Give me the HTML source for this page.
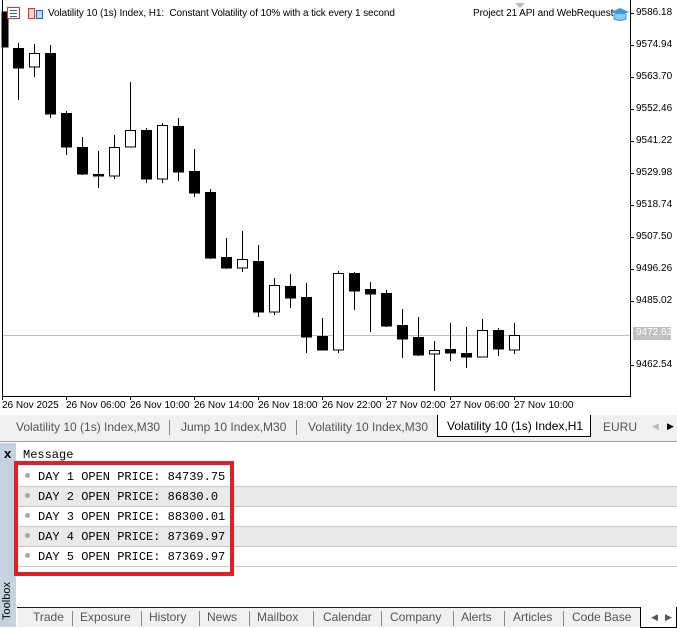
<!DOCTYPE html>
<html><head><meta charset="utf-8">
<style>
*{margin:0;padding:0;box-sizing:border-box}
body{width:677px;height:627px;overflow:hidden;background:#fff;font-family:"Liberation Sans",sans-serif;font-size:11px;color:#000;position:relative}
.abs{position:absolute;white-space:nowrap}
.pl{position:absolute;left:636px;font-size:10px}
.tl{position:absolute;top:400px;font-size:10px}
.tabs{position:absolute;left:0;top:415px;width:677px;height:27px;background:#f0f0f0;border-bottom:1px solid #a0a0a0}
.tab{position:absolute;top:5px;font-size:12px;color:#555}
.sep{position:absolute;top:5px;width:1px;height:15px;background:#888}
.row{position:absolute;left:17px;width:660px;height:20px;border-bottom:1px solid #c8c8c8;font-family:"Liberation Mono",monospace;font-size:12px;line-height:20px}
.row span.d{display:inline-block;width:5px;height:5px;border-radius:50%;background:#aaa;margin:0 8px 2px 8px;vertical-align:middle}
.g{background:#e9e9e9}
.btabs{position:absolute;left:17px;top:607px;width:660px;height:20px;background:#f0f0f0;border-top:1px solid #222}
.bt{position:absolute;top:2px;font-size:12px;color:#555}
</style></head><body>
<svg class="abs" style="left:0;top:0" width="677" height="415">
<rect x="2.5" y="-1" width="628" height="397.5" fill="none" stroke="#000"/>
<line x1="3" y1="335.5" x2="630" y2="335.5" stroke="#c0c0c0"/>
<polygon points="515,3 525,3 520,8" fill="#bbb"/>
<g stroke="#000" stroke-width="1">
<rect x="2" y="12" width="6" height="35" fill="#000"/>
<line x1="18.5" y1="43" x2="18.5" y2="100"/><rect x="13.5" y="48.5" width="10" height="19.5" fill="#000"/>
<line x1="34.5" y1="44" x2="34.5" y2="77"/><rect x="29.5" y="53.5" width="10" height="13.5" fill="#fff"/>
<line x1="50.5" y1="45" x2="50.5" y2="118"/><rect x="45.5" y="53.5" width="10" height="60.5" fill="#000"/>
<line x1="66.5" y1="111" x2="66.5" y2="155"/><rect x="61.5" y="113.5" width="10" height="33.5" fill="#000"/>
<line x1="82.5" y1="137" x2="82.5" y2="175"/><rect x="77.5" y="147.5" width="10" height="26.5" fill="#000"/>
<line x1="98.5" y1="151" x2="98.5" y2="188"/><rect x="93.5" y="174.5" width="10" height="1.5" fill="#000"/>
<line x1="114.5" y1="135" x2="114.5" y2="179"/><rect x="109.5" y="147.5" width="10" height="28.5" fill="#fff"/>
<line x1="130.5" y1="82" x2="130.5" y2="147"/><rect x="125.5" y="130.5" width="10" height="16.5" fill="#fff"/>
<line x1="146.5" y1="128" x2="146.5" y2="183"/><rect x="141.5" y="130.5" width="10" height="48.5" fill="#000"/>
<line x1="162.5" y1="123" x2="162.5" y2="183"/><rect x="157.5" y="125.5" width="10" height="53.5" fill="#fff"/>
<line x1="178.5" y1="118" x2="178.5" y2="181"/><rect x="173.5" y="126.5" width="10" height="45.5" fill="#000"/>
<line x1="194.5" y1="149" x2="194.5" y2="197"/><rect x="189.5" y="171.5" width="10" height="21.5" fill="#000"/>
<line x1="210.5" y1="189" x2="210.5" y2="259"/><rect x="205.5" y="192.5" width="10" height="65.5" fill="#000"/>
<line x1="226.5" y1="238" x2="226.5" y2="269"/><rect x="221.5" y="257.5" width="10" height="10.5" fill="#000"/>
<line x1="242.5" y1="231" x2="242.5" y2="272"/><rect x="237.5" y="259.5" width="10" height="8.5" fill="#fff"/>
<line x1="258.5" y1="245" x2="258.5" y2="317"/><rect x="253.5" y="261.5" width="10" height="50.5" fill="#000"/>
<line x1="274.5" y1="278" x2="274.5" y2="315"/><rect x="269.5" y="285.5" width="10" height="26.5" fill="#fff"/>
<line x1="290.5" y1="274" x2="290.5" y2="308"/><rect x="285.5" y="286.5" width="10" height="11.5" fill="#000"/>
<line x1="306.5" y1="283" x2="306.5" y2="353"/><rect x="301.5" y="297.5" width="10" height="39.5" fill="#000"/>
<line x1="322.5" y1="318" x2="322.5" y2="350"/><rect x="317.5" y="336.5" width="10" height="13.5" fill="#000"/>
<line x1="338.5" y1="271" x2="338.5" y2="353"/><rect x="333.5" y="273.5" width="10" height="76.5" fill="#fff"/>
<line x1="354.5" y1="272" x2="354.5" y2="310"/><rect x="349.5" y="273.5" width="10" height="17.5" fill="#000"/>
<line x1="370.5" y1="282" x2="370.5" y2="332"/><rect x="365.5" y="289.5" width="10" height="4.5" fill="#000"/>
<line x1="386.5" y1="290" x2="386.5" y2="327"/><rect x="381.5" y="293.5" width="10" height="32.5" fill="#000"/>
<line x1="402.5" y1="309" x2="402.5" y2="358"/><rect x="397.5" y="325.5" width="10" height="13.5" fill="#000"/>
<line x1="418.5" y1="317" x2="418.5" y2="356"/><rect x="413.5" y="337.5" width="10" height="17.5" fill="#000"/>
<line x1="434.5" y1="341" x2="434.5" y2="391"/><rect x="429.5" y="350.5" width="10" height="3.5" fill="#fff"/>
<line x1="450.5" y1="323" x2="450.5" y2="361"/><rect x="445.5" y="349.5" width="10" height="3.5" fill="#000"/>
<line x1="466.5" y1="327" x2="466.5" y2="368"/><rect x="461.5" y="353.5" width="10" height="3.5" fill="#000"/>
<line x1="482.5" y1="319" x2="482.5" y2="357"/><rect x="477.5" y="330.5" width="10" height="26.5" fill="#fff"/>
<line x1="498.5" y1="328" x2="498.5" y2="356"/><rect x="493.5" y="330.5" width="10" height="18.5" fill="#000"/>
<line x1="514.5" y1="323" x2="514.5" y2="354"/><rect x="509.5" y="335.5" width="10" height="14.5" fill="#fff"/>
</g>
<g stroke="#000">
<line x1="630" y1="13.5" x2="634" y2="13.5"/><line x1="630" y1="45.5" x2="634" y2="45.5"/><line x1="630" y1="77.5" x2="634" y2="77.5"/><line x1="630" y1="109.5" x2="634" y2="109.5"/><line x1="630" y1="141.5" x2="634" y2="141.5"/><line x1="630" y1="173.5" x2="634" y2="173.5"/><line x1="630" y1="205.5" x2="634" y2="205.5"/><line x1="630" y1="237.5" x2="634" y2="237.5"/><line x1="630" y1="269.5" x2="634" y2="269.5"/><line x1="630" y1="301.5" x2="634" y2="301.5"/><line x1="630" y1="365.5" x2="634" y2="365.5"/>
<line x1="2.5" y1="396" x2="2.5" y2="400"/><line x1="66.5" y1="396" x2="66.5" y2="400"/><line x1="130.5" y1="396" x2="130.5" y2="400"/><line x1="194.5" y1="396" x2="194.5" y2="400"/><line x1="258.5" y1="396" x2="258.5" y2="400"/><line x1="322.5" y1="396" x2="322.5" y2="400"/><line x1="386.5" y1="396" x2="386.5" y2="400"/><line x1="450.5" y1="396" x2="450.5" y2="400"/><line x1="514.5" y1="396" x2="514.5" y2="400"/>
</g>
<rect x="7.5" y="7.5" width="12" height="11" fill="#fff" stroke="#e03030"/>
<line x1="10" y1="10.5" x2="17" y2="10.5" stroke="#2060c0"/><line x1="10" y1="13.5" x2="17" y2="13.5" stroke="#2060c0"/><line x1="10" y1="16.5" x2="17" y2="16.5" stroke="#2060c0"/>
<rect x="28.5" y="8.5" width="6" height="10" fill="#fbd0d0" stroke="#e03030"/><rect x="36.5" y="10.5" width="6" height="8" fill="#b8d8f4" stroke="#2060c0"/>
<path d="M611 12 L620 8 L629 12 L620 16 Z" fill="#3a9ad8"/><path d="M614 14 v5 q6 3 12 0 v-5" fill="#8cc8ee" stroke="#3a9ad8"/>
<rect x="633" y="327" width="38" height="13" fill="#c0c0c0"/>
</svg>
<div class="abs" style="left:48px;top:8px;font-size:10px;letter-spacing:-0.1px">Volatility 10 (1s) Index, H1:&nbsp; Constant Volatility of 10% with a tick every 1 second</div>
<div class="abs" style="left:473px;top:8px;font-size:10px;letter-spacing:-0.1px">Project 21 API and WebRequest</div>
<div class="pl" style="top:7px">9586.18</div>
<div class="pl" style="top:39px">9574.94</div>
<div class="pl" style="top:71px">9563.70</div>
<div class="pl" style="top:103px">9552.46</div>
<div class="pl" style="top:135px">9541.22</div>
<div class="pl" style="top:167px">9529.98</div>
<div class="pl" style="top:199px">9518.74</div>
<div class="pl" style="top:231px">9507.50</div>
<div class="pl" style="top:263px">9496.26</div>
<div class="pl" style="top:295px">9485.02</div>
<div class="pl" style="top:327px;color:#fff">9472.62</div>
<div class="pl" style="top:359px">9462.54</div>
<div class="tl" style="left:2px">26 Nov 2025</div>
<div class="tl" style="left:66px">26 Nov 06:00</div>
<div class="tl" style="left:130px">26 Nov 10:00</div>
<div class="tl" style="left:194px">26 Nov 14:00</div>
<div class="tl" style="left:258px">26 Nov 18:00</div>
<div class="tl" style="left:322px">26 Nov 22:00</div>
<div class="tl" style="left:386px">27 Nov 02:00</div>
<div class="tl" style="left:450px">27 Nov 06:00</div>
<div class="tl" style="left:514px">27 Nov 10:00</div>
<div class="tabs">
<div class="tab" style="left:16px">Volatility 10 (1s) Index,M30</div><div class="sep" style="left:169px"></div>
<div class="tab" style="left:181px">Jump 10 Index,M30</div><div class="sep" style="left:296px"></div>
<div class="tab" style="left:308px">Volatility 10 Index,M30</div>
<div style="position:absolute;left:437px;top:0;width:154px;height:22px;background:#fff;border:1px solid #000;border-top:none"></div>
<div class="tab" style="left:447px;top:4px;color:#000">Volatility 10 (1s) Index,H1</div>
<div class="tab" style="left:603px">EURU</div>
<div class="tab" style="left:652px;color:#bbb;font-size:9px;top:6px">◀</div>
<div class="tab" style="left:667px;color:#000;font-size:9px;top:6px">▶</div>
</div>
<div class="abs" style="left:0;top:443px;width:16px;height:184px;background:#c5d2e0"></div>
<div class="abs" style="left:4px;top:446px;font-size:13px;font-weight:bold">x</div>
<div class="abs" style="left:-12px;top:595px;transform:rotate(-90deg);font-size:11px">Toolbox</div>
<div class="abs" style="left:23px;top:448px;font-family:'Liberation Mono',monospace;font-size:12px">Message</div>
<div class="row" style="top:467px"><span class="d"></span>DAY 1 OPEN PRICE: 84739.75</div>
<div class="row g" style="top:487px"><span class="d"></span>DAY 2 OPEN PRICE: 86830.0</div>
<div class="row" style="top:507px"><span class="d"></span>DAY 3 OPEN PRICE: 88300.01</div>
<div class="row g" style="top:527px"><span class="d"></span>DAY 4 OPEN PRICE: 87369.97</div>
<div class="row" style="top:547px"><span class="d"></span>DAY 5 OPEN PRICE: 87369.97</div>
<div class="abs" style="left:14px;top:461px;width:220px;height:115px;border:4px solid #e41e26"></div>
<div class="btabs">
<div class="bt" style="left:16px">Trade</div><div class="sep" style="left:55px;top:3px"></div>
<div class="bt" style="left:63px">Exposure</div><div class="sep" style="left:124px;top:3px"></div>
<div class="bt" style="left:132px">History</div><div class="sep" style="left:182px;top:3px"></div>
<div class="bt" style="left:190px">News</div><div class="sep" style="left:232px;top:3px"></div>
<div class="bt" style="left:240px">Mailbox</div><div class="sep" style="left:296px;top:3px"></div>
<div class="bt" style="left:306px">Calendar</div><div class="sep" style="left:364px;top:3px"></div>
<div class="bt" style="left:373px">Company</div><div class="sep" style="left:436px;top:3px"></div>
<div class="bt" style="left:444px">Alerts</div><div class="sep" style="left:487px;top:3px"></div>
<div class="bt" style="left:496px">Articles</div><div class="sep" style="left:546px;top:3px"></div>
<div class="bt" style="left:555px">Code Base</div>
<div style="position:absolute;left:623px;top:-1px;width:37px;height:21px;background:#fff;border:1px solid #000;border-top:none"></div>
<div class="bt" style="left:634px;font-size:9px;top:4px">◀</div><div class="bt" style="left:648px;font-size:9px;top:4px">▶</div>
</div>
</body></html>
